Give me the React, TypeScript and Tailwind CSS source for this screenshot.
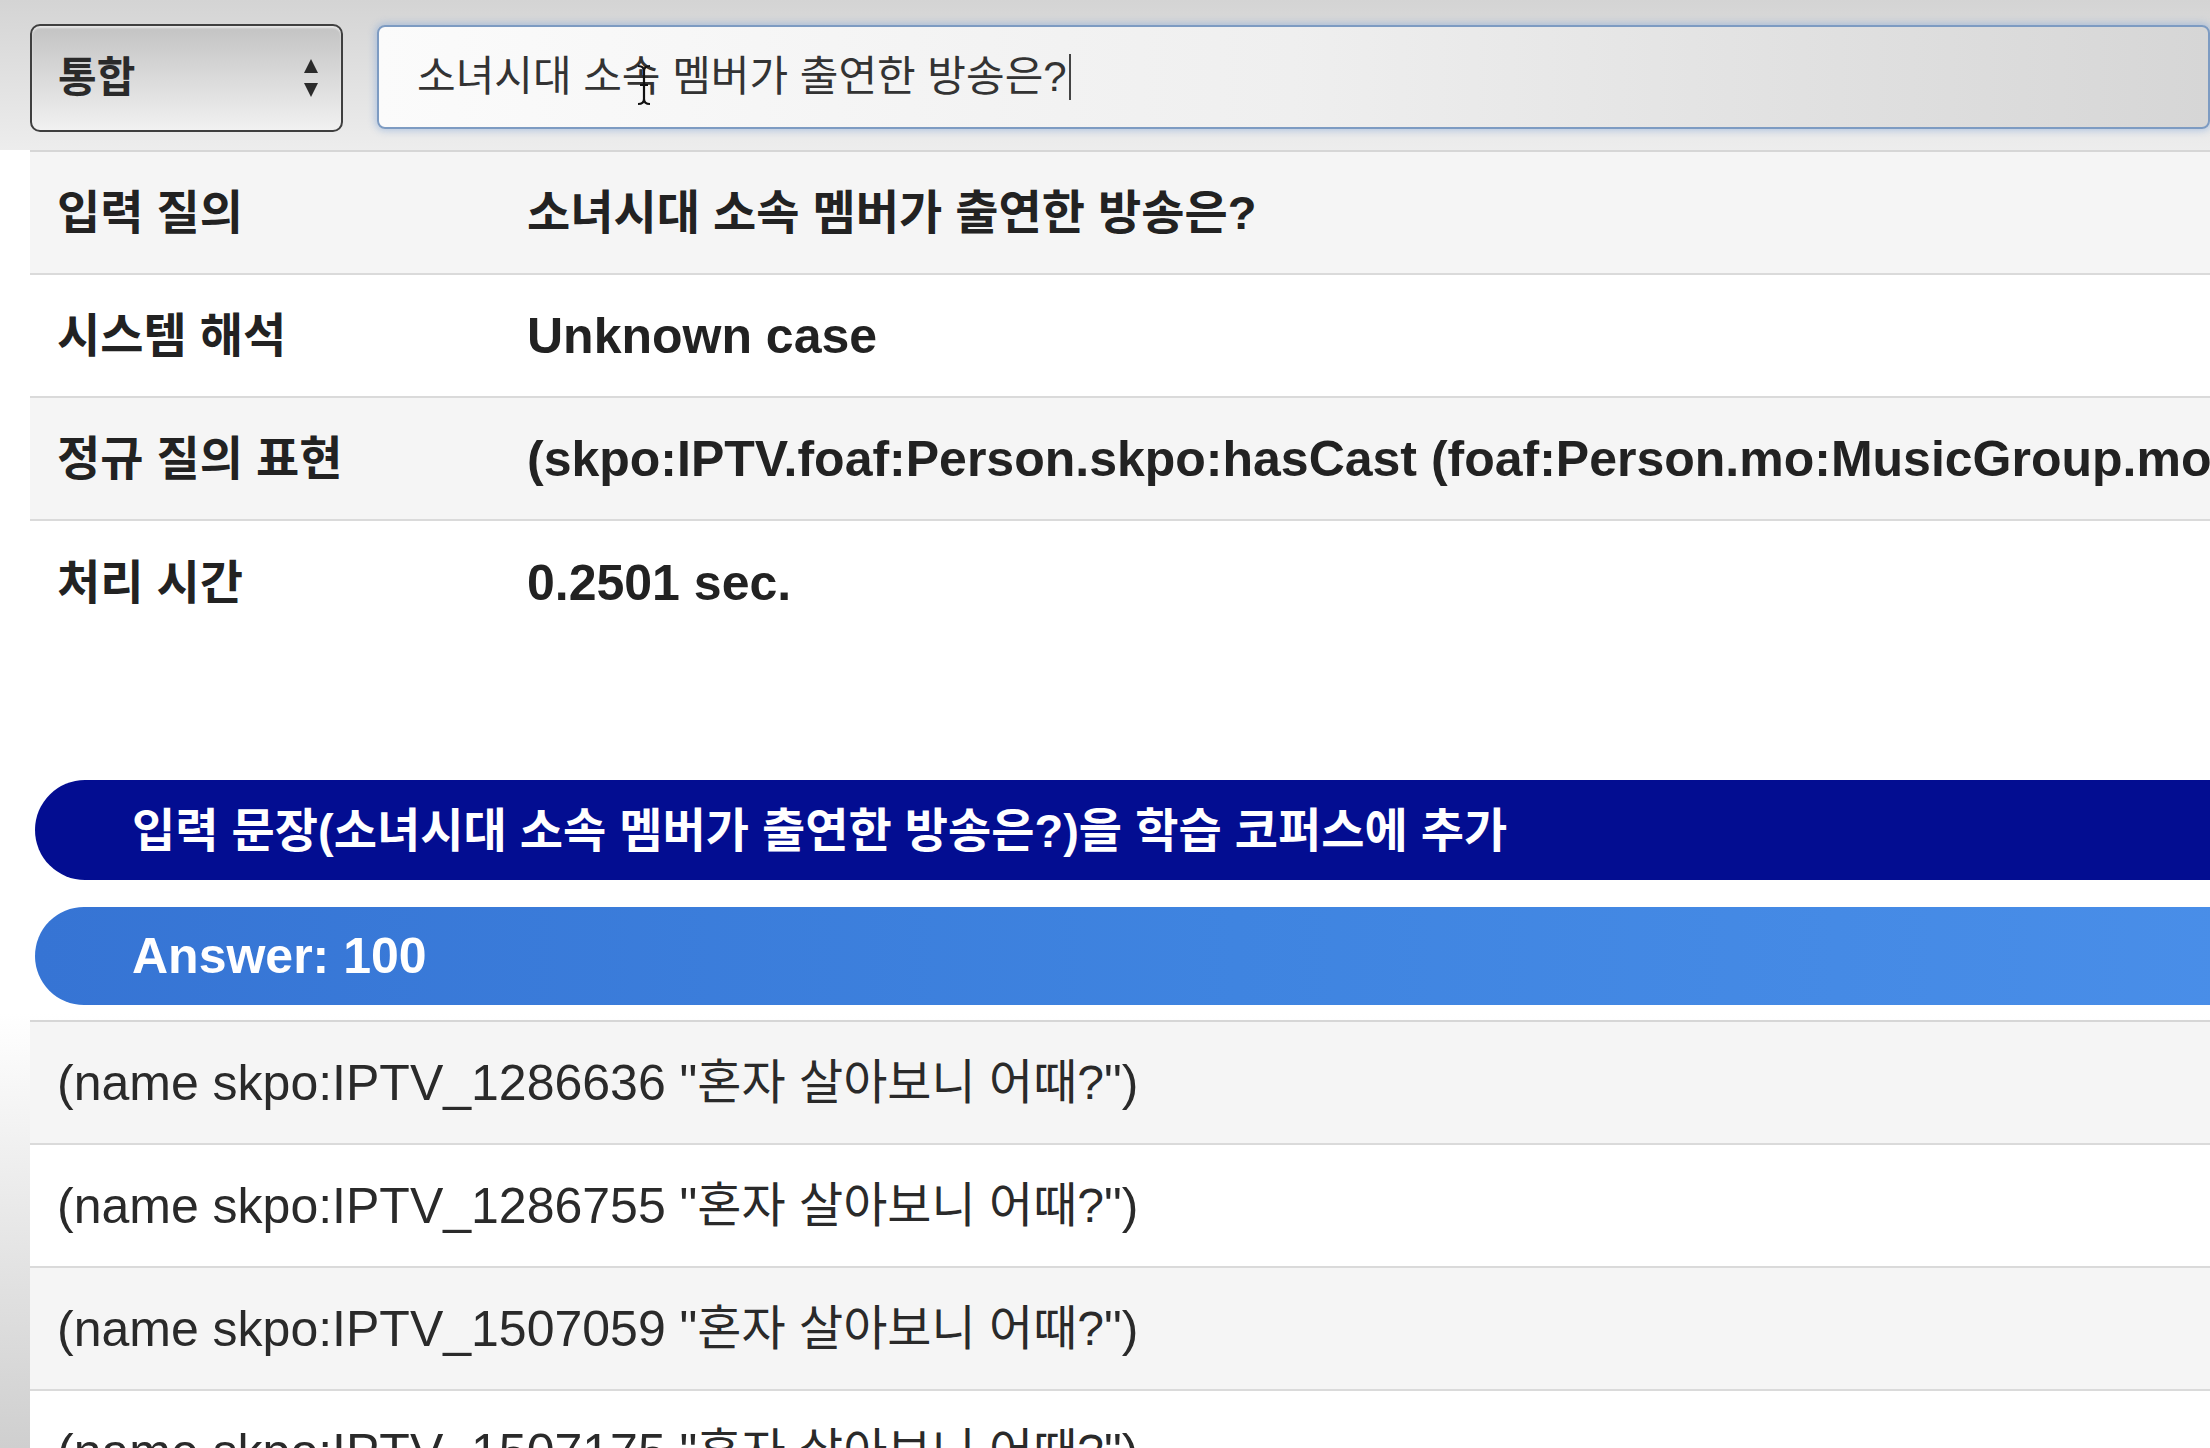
import React from "react";

const infoRows = [
  { label: "입력 질의", value: "소녀시대 소속 멤버가 출연한 방송은?", latin: false },
  { label: "시스템 해석", value: "Unknown case", latin: true },
  {
    label: "정규 질의 표현",
    value: "(skpo:IPTV.foaf:Person.skpo:hasCast (foaf:Person.mo:MusicGroup.mo:",
    latin: true,
  },
  { label: "처리 시간", value: "0.2501 sec.", latin: true },
];

const answers = ["1286636", "1286755", "1507059", "1507175"];

const UpDownArrows = () => (
  <svg width="16" height="40" viewBox="0 0 16 40">
    <path d="M8 1 L15 15 L1 15 Z" fill="#2b2b2b" />
    <path d="M1 25 L15 25 L8 39 Z" fill="#2b2b2b" />
  </svg>
);

const IBeam = () => (
  <svg
    width="18"
    height="42"
    viewBox="0 0 18 42"
    className="absolute left-[256px] top-[37px]"
  >
    <path
      d="M3 2 Q9 2 9 7 Q9 2 15 2 M9 7 V35 M3 40 Q9 40 9 35 Q9 40 15 40 M5 21 H13"
      stroke="#111"
      strokeWidth="2.2"
      fill="none"
    />
  </svg>
);

const SearchBar = () => (
  <div className="h-[150px] flex items-start pt-[24px] pl-[30px] gap-[34px] bg-linear-to-b from-[#d4d4d4] to-[#ededed]">
    <div className="w-[313px] h-[108px] shrink-0 rounded-[10px] border-2 border-[#3f3f3f] bg-linear-to-b from-[#c3c3c3] via-[#dadada] to-[#f1f1f1] flex items-center justify-between pl-[26px] pr-[22px] shadow-[inset_0_2px_2px_rgba(255,255,255,0.6)]">
      <span className="text-[42px] leading-none text-[#2a2a2a] font-bold">통합</span>
      <UpDownArrows />
    </div>
    <div className="relative w-[2000px] h-[104px] mt-[1px] rounded-[8px] border-2 border-[#7d9bc2] bg-linear-to-r from-[#fbfbfb] via-[#efefef] to-[#d6d6d6] shadow-[0_0_7px_2px_rgba(120,160,215,0.45)] flex items-center pl-[38px]">
      <span className="text-[42px] leading-none text-[#333333]">소녀시대 소속 멤버가 출연한 방송은?</span>
      <span className="w-[2px] h-[46px] bg-[#444444] ml-[2px]" />
      <IBeam />
    </div>
  </div>
);

const InfoTable = () => (
  <div className="ml-[30px] w-[2300px] border-t-2 border-[#d6d6d6]">
    {infoRows.map((row, i) => (
      <div
        key={row.label}
        className={
          "h-[123px] flex items-center " +
          (i % 2 === 0 ? "bg-[#f5f5f5] " : "bg-white ") +
          (i < infoRows.length - 1 ? "border-b-2 border-[#dadada]" : "")
        }
      >
        <div className="w-[497px] pl-[27px] shrink-0 text-[47px] leading-none font-bold text-[#222222]">
          {row.label}
        </div>
        <div
          className={
            "whitespace-nowrap leading-none font-bold text-[#222222] " +
            (row.latin ? "text-[50px]" : "text-[47px]")
          }
        >
          {row.value}
        </div>
      </div>
    ))}
  </div>
);

const Bars = () => (
  <div className="ml-[35px] mt-[136px] w-[2400px] flex flex-col gap-[27px]">
    <div className="h-[100px] rounded-full bg-[#030d91] flex items-center pl-[97px]">
      <span className="text-[47px] leading-none font-bold text-white whitespace-nowrap">
        입력 문장(소녀시대 소속 멤버가 출연한 방송은?)을 학습 코퍼스에 추가
      </span>
    </div>
    <div className="h-[98px] rounded-full bg-linear-to-r from-[#3674d4] via-[#3f84e0] to-[#4b90ea] flex items-center pl-[97px]">
      <span className="text-[50px] leading-none font-bold text-white">Answer: 100</span>
    </div>
  </div>
);

const AnswerList = () => (
  <div className="ml-[30px] mt-[15px] w-[2300px] border-t-2 border-[#d6d6d6]">
    {answers.map((id, i) => (
      <div
        key={id}
        className={
          "h-[123px] flex items-center pl-[27px] border-b-2 border-[#dadada] whitespace-nowrap text-[#2a2a2a] leading-none " +
          (i % 2 === 0 ? "bg-[#f5f5f5]" : "bg-white")
        }
      >
        <span className="text-[50px]">(name skpo:IPTV_{id} "</span>
        <span className="text-[48px]">혼자 살아보니 어때?</span>
        <span className="text-[50px]">")</span>
      </div>
    ))}
  </div>
);

const App = () => {
  return (
    <div className="w-[2210px] h-[1448px] overflow-hidden bg-linear-to-b from-white via-white via-70% to-[#cfcfcf] font-['Liberation_Sans','Noto_Sans_CJK_KR',sans-serif]">
      <SearchBar />
      <InfoTable />
      <div className="bg-white">
        <Bars />
      </div>
      <AnswerList />
    </div>
  );
};

export default App;
